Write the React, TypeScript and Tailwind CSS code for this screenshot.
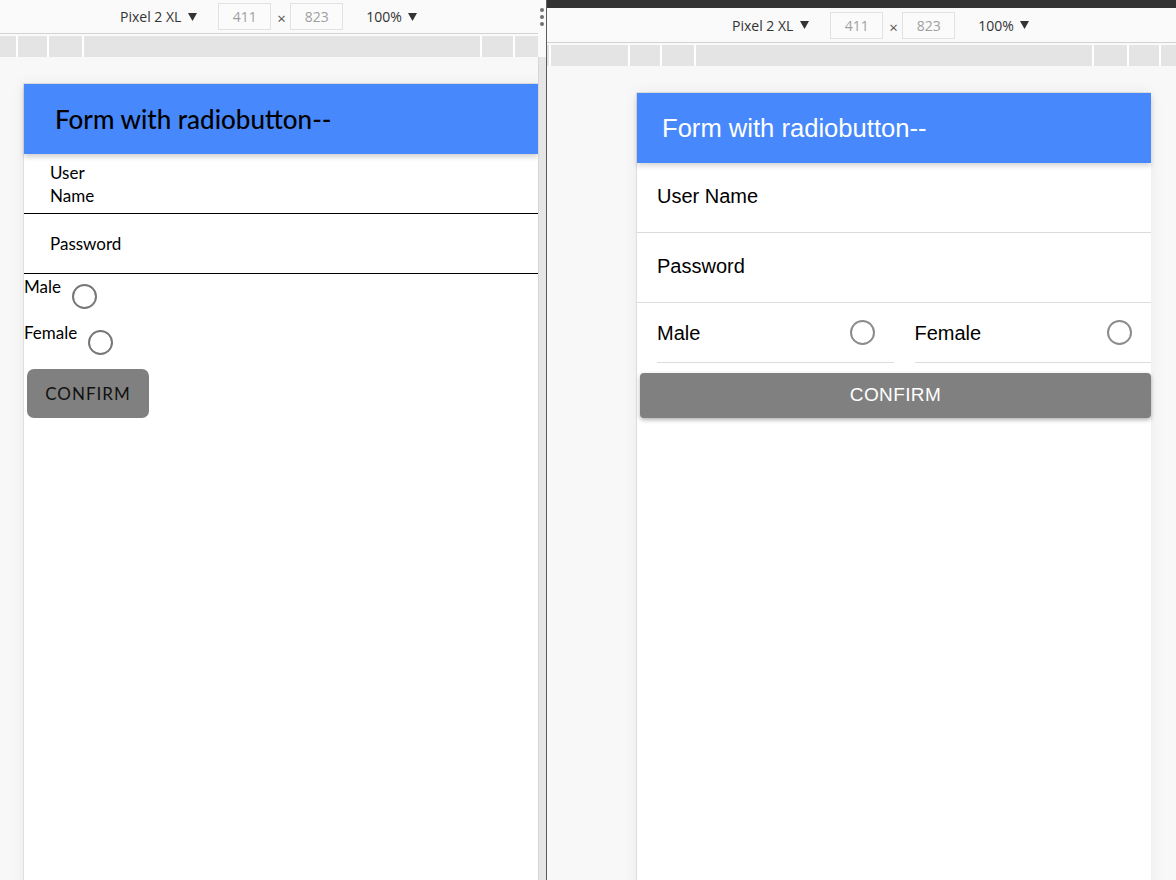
import type { ReactNode } from "react";

const segoe = "font-['Open_Sans',sans-serif]";
const leftText = "font-[Lato,'Noto_Sans',sans-serif]";
const arial = "font-['Liberation_Sans',Arial,sans-serif]";

function Caret() {
  return (
    <svg width="9" height="8" viewBox="0 0 9 8" className="shrink-0">
      <polygon points="0,0 9,0 4.5,8" fill="#333" />
    </svg>
  );
}

function SizeBox({ value }: { value: string }) {
  return (
    <div className="flex h-[27px] w-[53px] items-center justify-center border border-[#e2e2e2] bg-[#fbfbfb] text-[14px] text-[#a0a0a0]">
      {value}
    </div>
  );
}

function DeviceToolbar({ pad, height, ruler }: { pad: string; height: string; ruler: number[] }) {
  return (
    <div className={`${segoe} bg-[#fafafa]`}>
      <div className={`flex ${height} items-center ${pad} text-[14px] text-[#333]`}>
        <span>Pixel 2 XL</span>
        <span className="ml-[7px]">
          <Caret />
        </span>
        <span className="ml-[21px]">
          <SizeBox value="411" />
        </span>
        <span className="ml-[6px] mt-[4px] w-[9px] text-[15px] leading-none text-[#555]">×</span>
        <span className="ml-[4px]">
          <SizeBox value="823" />
        </span>
        <span className="ml-[23px]">100%</span>
        <span className="ml-[6px]">
          <Caret />
        </span>
      </div>
      <div className="h-[1px] bg-[#d2d2d2]" />
      <div className="flex h-[23px] pt-[2px]">
        {ruler.map((w, i) => (
          <div
            key={i}
            style={{ width: w }}
            className={`h-[21px] shrink-0 bg-[#e4e4e4] ${i > 0 ? "border-l-2 border-white" : ""}`}
          />
        ))}
      </div>
    </div>
  );
}

function Dots() {
  return (
    <div className="flex h-[33px] w-[8px] flex-col items-center justify-center gap-[3px] bg-[#fafafa]">
      <span className="h-[4px] w-[4px] rounded-full bg-[#6f6f6f]" />
      <span className="h-[4px] w-[4px] rounded-full bg-[#6f6f6f]" />
      <span className="h-[4px] w-[4px] rounded-full bg-[#6f6f6f]" />
    </div>
  );
}

function Radio({ color }: { color: string }) {
  return <span className={`block h-[25px] w-[25px] shrink-0 rounded-full border-2 ${color} bg-white`} />;
}

function LeftForm() {
  return (
    <div className={`${leftText} flex flex-col text-black`}>
      <div className="relative z-10 flex h-[70px] items-center bg-[#4788fd] pl-[31px] shadow-[0_3px_5px_rgba(0,0,0,0.18)]">
        <h1 className="text-[26px] font-medium">Form with radiobutton--</h1>
      </div>
      <div className="flex h-[60px] items-center border-b border-black pl-[26px]">
        <span className="w-[48px] text-[17px] leading-[23px]">User Name</span>
      </div>
      <div className="flex h-[60px] items-center border-b border-black pl-[26px]">
        <span className="text-[17px] leading-[23px]">Password</span>
      </div>
      <div className="mt-[1px] flex h-[46px] items-start gap-[11px]">
        <span className="text-[17px] leading-[23px]">Male</span>
        <span className="mt-[9px]">
          <Radio color="border-[#777]" />
        </span>
      </div>
      <div className="flex h-[48px] items-start gap-[11px]">
        <span className="text-[17px] leading-[23px]">Female</span>
        <span className="mt-[9px]">
          <Radio color="border-[#777]" />
        </span>
      </div>
      <button
        type="button"
        className="ml-[3px] h-[49px] w-[122px] rounded-[7px] bg-[#808080] text-[17px] tracking-[1px] text-[#111]"
      >
        CONFIRM
      </button>
    </div>
  );
}

function GenderOption({ label }: { label: string }) {
  return (
    <div className="flex h-[60px] flex-1 items-center justify-between border-b border-[#dcdcdc] pr-[19px]">
      <span className="text-[20px]">{label}</span>
      <Radio color="border-[#8c8c8c]" />
    </div>
  );
}

function RightForm() {
  return (
    <div className={`${arial} flex flex-col text-black`}>
      <div className="relative z-10 flex h-[70px] items-center bg-[#4788fd] pl-[25px] shadow-[0_3px_5px_rgba(0,0,0,0.16)]">
        <h1 className="text-[25.6px] text-white">Form with radiobutton--</h1>
      </div>
      <div className="flex h-[70px] items-center border-b border-[#dcdcdc] pb-[4px] pl-[20px] text-[20px]">User Name</div>
      <div className="flex h-[70px] items-center border-b border-[#dcdcdc] pb-[4px] pl-[20px] text-[20px]">Password</div>
      <div className="flex gap-[21px] pl-[20px]">
        <GenderOption label="Male" />
        <GenderOption label="Female" />
      </div>
      <button
        type="button"
        className="ml-[3px] mt-[10px] h-[45px] rounded-[4px] bg-[#808080] text-[19px] tracking-[0.4px] text-white shadow-[0_2px_4px_rgba(0,0,0,0.3)]"
      >
        CONFIRM
      </button>
    </div>
  );
}

function Viewport({ children, offset }: { children: ReactNode; offset: string }) {
  return (
    <div className="flex-1 overflow-hidden bg-[#f8f8f8]">
      <div className={`${offset} mt-[26px] h-[900px] w-[515px] border-l border-t border-[#dedede] bg-white shadow-[0_0_14px_rgba(0,0,0,0.06)]`}>
        {children}
      </div>
    </div>
  );
}

export default function App() {
  return (
    <div className="flex h-[880px] w-[1176px] overflow-hidden bg-[#f8f8f8]">
      <div className="flex w-[546px] shrink-0 flex-col">
        <div className="flex">
          <div className="w-[538px]">
            <DeviceToolbar pad="pl-[120px]" height="h-[33px]" ruler={[16, 31, 35, 398, 33, 25]} />
          </div>
          <div className="flex w-[8px] flex-col bg-[#fafafa]">
            <Dots />
          </div>
        </div>
        <div className="flex flex-1">
          <Viewport offset="ml-[23px]">
            <LeftForm />
          </Viewport>
          <div className="w-[8px] border-l border-[#d6d6d6] bg-[#e6e6e6]" />
        </div>
      </div>
      <div className="w-[1px] shrink-0 bg-[#5c5c5c]" />
      <div className="flex flex-1 flex-col">
        <div className="h-[8px] bg-[#333]" />
        <div className="bg-[#fafafa]">
          <DeviceToolbar pad="pl-[185px]" height="h-[34px]" ruler={[2, 79, 32, 34, 398, 35, 32, 20]} />
        </div>
        <Viewport offset="ml-[89px]">
          <RightForm />
        </Viewport>
      </div>
    </div>
  );
}
